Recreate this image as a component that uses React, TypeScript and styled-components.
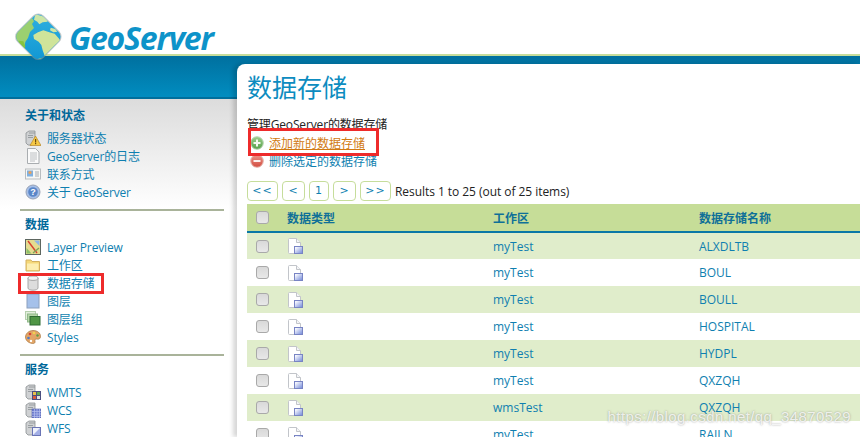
import React from "react";
import styled, { createGlobalStyle } from "styled-components";

const GlobalStyle = createGlobalStyle`
  html, body {
    margin: 0;
    padding: 0;
    width: 860px;
    height: 437px;
    overflow: hidden;
    background: #ffffff;
    font-family: "Open Sans", "Noto Sans CJK SC", sans-serif;
  }
  * { box-sizing: border-box; }
`;

const CJK = `"Open Sans", "Noto Sans CJK SC", sans-serif`;

const Logo = () => (
  <svg width="50" height="52" viewBox="39 39 150 156">
    <defs>
      <clipPath id="globe">
        <rect x="62" y="60" width="106" height="106" rx="20" transform="rotate(45 115 113)" />
      </clipPath>
      <linearGradient id="sea" x1="0" y1="0" x2="0" y2="1">
        <stop offset="0" stopColor="#2fb0e0" />
        <stop offset="1" stopColor="#0f96d2" />
      </linearGradient>
    </defs>
    <rect x="59" y="57" width="112" height="112" rx="23" transform="rotate(45 115 113)" fill="#8f9a9c" opacity="0.55" />
    <g clipPath="url(#globe)">
      <rect x="39" y="39" width="150" height="156" fill="url(#sea)" />
      <path d="M40 105l20-28 22-14 14-6 6 10-6 8 6 12-12 12-6 18-8 12-4 24-14-18-12-18z" fill="#9bd070" />
      <path d="M56 125l14 2 6 14-4 16-12-10z" fill="#86c440" />
      <path d="M106 46l22 6 20 4-6 12-14 2-10 6-6-8-10-6z" fill="#cde6a6" />
      <path d="M100 108l14-8 16-6 18 6 16 4 12 14 6 8-16 12-14 14-10 14-8 4-6-16-4-16-8-10-14-8z" fill="#cfe49a" />
      <path d="M96 186l24-8 22-4-8 14-18 8z" fill="#a9d87a" />
      <path d="M152 86l14 4 6 8-12 2-10-6z" fill="#cde6a6" />
    </g>
  </svg>
);

const Server = ({ children }: { children?: React.ReactNode }) => (
  <svg width="16" height="16" viewBox="0 0 16 16">
    <path d="M1 3l3-2h6v12l-3 2H3l-2-2z" fill="#cfd1d3" stroke="#8a8f92" strokeWidth="0.8" />
    <path d="M4 3h6" stroke="#8a8f92" strokeWidth="0.8" />
    <rect x="3" y="5" width="5" height="1" fill="#9a9fa2" />
    <rect x="3" y="7" width="5" height="1" fill="#9a9fa2" />
    {children}
  </svg>
);

const icons: Record<string, React.ReactNode> = {
  status: (
    <Server>
      <path d="M10.500 6L16 15.500H5z" fill="#f6c945" stroke="#b8862a" strokeWidth="0.7" />
      <rect x="10" y="9" width="1.200" height="3.500" fill="#6b4a10" />
      <rect x="10" y="13" width="1.200" height="1.200" fill="#6b4a10" />
    </Server>
  ),
  log: (
    <svg width="16" height="16" viewBox="0 0 16 16">
      <path d="M2.500 0.500h8l3.500 3.500v11.500H2.500z" fill="#fafafa" stroke="#a9adb0" />
      <path d="M5 5h7M5 7h7M5 9h7M5 11h7M5 13h5" stroke="#b6b9bc" strokeWidth="0.9" />
    </svg>
  ),
  contact: (
    <svg width="16" height="16" viewBox="0 0 16 16">
      <rect x="0.500" y="3" width="15" height="10" fill="#f7f7f5" stroke="#b9bdc0" />
      <rect x="2" y="4.500" width="6" height="6" fill="#7fb0e0" />
      <circle cx="5" cy="6.500" r="1.600" fill="#e9a05a" />
      <path d="M10 6h4M10 8h4M10 10h4" stroke="#a8acb0" />
    </svg>
  ),
  about: (
    <svg width="16" height="16" viewBox="0 0 16 16">
      <circle cx="8" cy="8" r="7" fill="#a5bfe8" stroke="#9aa3b5" />
      <circle cx="8" cy="8" r="4.800" fill="#5a86c8" />
      <text x="8" y="11" textAnchor="middle" fontSize="9" fontWeight="700" fill="#ffffff" fontFamily="Liberation Sans">?</text>
    </svg>
  ),
  preview: (
    <svg width="16" height="16" viewBox="0 0 16 16">
      <rect x="0.500" y="0.500" width="15" height="15" fill="#e4dc8f" stroke="#5d6660" />
      <path d="M9 1.500h5.500V7z" fill="#8fb5e6" />
      <path d="M1.500 9l5 5.500H1.500z" fill="#8cc06a" />
      <path d="M3 2l9 12" stroke="#d8402f" strokeWidth="1.400" />
      <path d="M8 14l6-5" stroke="#7fa65a" strokeWidth="1.400" />
    </svg>
  ),
  folder: (
    <svg width="16" height="16" viewBox="0 0 16 16">
      <path d="M1 3h5l1 1.500h7.500V14H1z" fill="#f5d878" stroke="#d4b060" />
      <rect x="2" y="6.500" width="11.500" height="6.500" fill="#fdeeb0" />
    </svg>
  ),
  store: (
    <svg width="16" height="16" viewBox="0 0 16 16">
      <path d="M3 3v10c0 1.300 2.200 2.200 5 2.200s5-.9 5-2.200V3z" fill="#dddddd" stroke="#a6a6a6" />
      <ellipse cx="8" cy="3.200" rx="5" ry="2.200" fill="#f3f3f3" stroke="#a6a6a6" />
    </svg>
  ),
  layer: (
    <svg width="16" height="16" viewBox="0 0 16 16">
      <rect x="2" y="1" width="12" height="14" fill="#a5c1ea" stroke="#8ca0bd" />
    </svg>
  ),
  group: (
    <svg width="16" height="16" viewBox="0 0 16 16">
      <rect x="0.500" y="0.500" width="10" height="8" fill="#e3efdc" stroke="#b5cfae" />
      <rect x="2.500" y="3" width="10" height="8" fill="#b6d6a8" stroke="#8fb88a" />
      <rect x="5" y="5.500" width="10" height="8.500" fill="#4f9545" stroke="#2f6b32" />
    </svg>
  ),
  styles: (
    <svg width="16" height="16" viewBox="0 0 16 16">
      <path d="M8 1.500c4.500 0 7.500 2.500 7.500 6 0 2.500-2 3-3.500 2.600-1.600-.4-2.500.5-2 2 .5 1.600-.6 2.700-2.500 2.400C3.500 14 .5 11.500.5 8S4 1.500 8 1.500z" fill="#e2a566" stroke="#a8743c" strokeWidth="0.7" />
      <circle cx="5" cy="5" r="1.300" fill="#d8402f" />
      <circle cx="9" cy="4" r="1.300" fill="#f1d14f" />
      <circle cx="12.500" cy="6.500" r="1.200" fill="#5f9e46" />
      <circle cx="3.500" cy="9" r="1.300" fill="#4f79c5" />
      <circle cx="6" cy="12" r="1.200" fill="#ffffff" />
    </svg>
  ),
  wmts: (
    <Server>
      <rect x="7" y="7" width="9" height="9" fill="#4a4f80" />
      <rect x="8" y="8" width="3" height="3" fill="#e8c04a" />
      <rect x="12" y="8" width="3" height="3" fill="#5fa84d" />
      <rect x="8" y="12" width="3" height="3" fill="#d85a3a" />
      <rect x="12" y="12" width="3" height="3" fill="#e0e0e0" />
    </Server>
  ),
  wcs: (
    <Server>
      <rect x="7" y="7" width="9" height="9" fill="#6f7fd0" stroke="#5560a8" strokeWidth="0.6" />
      <path d="M7 9.500h9M7 12h9M7 14.500h9M9.500 7v9M12 7v9M14.500 7v9" stroke="#b9c2ee" strokeWidth="0.7" />
    </Server>
  ),
  wfs: (
    <Server>
      <rect x="7.500" y="7.500" width="8" height="8" fill="#eef1fb" stroke="#6a74b5" />
      <path d="M8 15l7-7v7z" fill="#a3afe6" />
    </Server>
  ),
};

const PageIcon = () => (
  <svg width="15" height="16" viewBox="0 0 15 16">
    <defs>
      <linearGradient id="corner" x1="0" y1="0" x2="1" y2="1">
        <stop offset="0.2" stopColor="#f2f4fc" />
        <stop offset="1" stopColor="#6f86d8" />
      </linearGradient>
    </defs>
    <path d="M.5 1.500q0-1 1-1h7l4 4v10q0 1-1 1h-10q-1 0-1-1z" fill="#ffffff" stroke="#c2c5ca" />
    <path d="M8.500 .5v4h4" fill="#f4f5f7" stroke="#c2c5ca" />
    <rect x="6.500" y="8.500" width="8" height="7" fill="url(#corner)" stroke="#7884c4" />
  </svg>
);

const PlusIcon = () => (
  <svg width="14" height="14" viewBox="0 0 14 14">
    <defs>
      <linearGradient id="plus" x1="0" y1="0" x2="0" y2="1">
        <stop offset="0" stopColor="#9ccf8c" />
        <stop offset="1" stopColor="#55a04a" />
      </linearGradient>
    </defs>
    <circle cx="7" cy="7" r="6.300" fill="url(#plus)" stroke="#bcd4b4" />
    <path d="M7 3.500v7M3.500 7h7" stroke="#f2f8ee" strokeWidth="2" />
  </svg>
);

const MinusIcon = () => (
  <svg width="14" height="14" viewBox="0 0 14 14">
    <defs>
      <linearGradient id="minus" x1="0" y1="0" x2="0" y2="1">
        <stop offset="0" stopColor="#ec9488" />
        <stop offset="1" stopColor="#d24c40" />
      </linearGradient>
    </defs>
    <circle cx="7" cy="7" r="6.300" fill="url(#minus)" stroke="#e6b8b0" />
    <path d="M3.500 7h7" stroke="#fbf0ee" strokeWidth="2" />
  </svg>
);

const Header = styled.header`
  height: 56px;
  background: #ffffff;
  border-bottom: 2px solid #c6dd9b;
  display: flex;
  align-items: flex-start;
  padding: 12px 0 0 13px;
`;

const Wordmark = styled.span`
  font-family: "Open Sans", sans-serif;
  font-style: italic;
  font-weight: 700;
  font-size: 32px;
  line-height: 34px;
  letter-spacing: -1.2px;
  color: #0d93c9;
  margin: 9px 0 0 6px;
`;

const Band = styled.div`
  height: 43px;
  background: linear-gradient(#00709f, #018dc0);
  border-bottom: 2px solid #006f9c;
`;

const Body = styled.div`
  display: flex;
  align-items: flex-start;
`;

const Sidebar = styled.nav`
  width: 237px;
  height: 338px;
  flex: none;
  padding: 8px 13px 0 20px;
  background: linear-gradient(#dcdcdc, #ffffff 110px);
`;

const Section = styled.section`
  border-bottom: 2px solid #a9b39a;
  padding: 0 0 8px 5px;
  margin-bottom: 5px;
  &:last-child { border-bottom: none; }
`;

const SectionTitle = styled.h3`
  margin: 0 0 4px;
  font-family: ${CJK};
  font-size: 12px;
  line-height: 18px;
  font-weight: 700;
  color: #00689a;
`;

const NavItem = styled.a`
  display: flex;
  align-items: center;
  gap: 6px;
  height: 18px;
  font-family: ${CJK};
  font-size: 12px;
  letter-spacing: -0.15px;
  color: #0f7fb0;
  white-space: nowrap;
  svg { flex: none; }
`;

const Main = styled.main`
  position: relative;
  flex: 1;
  height: 373px;
  margin-top: -35px;
  padding: 7px 0 0 10px;
  background: #ffffff;
  border-radius: 8px 0 0 0;
  box-shadow: -4px 0 4px rgba(0, 0, 0, 0.16);
  overflow: hidden;
`;

const Title = styled.h1`
  margin: 0;
  font-family: ${CJK};
  font-size: 25px;
  line-height: 32px;
  font-weight: 400;
  color: #0d8cc0;
`;

const Description = styled.p`
  margin: 13px 0 0;
  font-family: ${CJK};
  font-size: 12px;
  line-height: 18px;
  letter-spacing: -0.15px;
  color: #222222;
`;

const ActionLink = styled.a<{ $primary?: boolean }>`
  display: flex;
  align-items: center;
  gap: 5px;
  height: 18px;
  padding-left: 3px;
  font-family: ${CJK};
  font-size: 12px;
  color: ${(p) => (p.$primary ? "#d17a12" : "#0f7fb0")};
  text-decoration: ${(p) => (p.$primary ? "underline" : "none")};
`;

const Pager = styled.div`
  display: flex;
  align-items: center;
  gap: 4px;
  margin-top: 11px;
  height: 20px;
  font-size: 12px;
  letter-spacing: -0.05px;
  color: #222222;
`;

const PageButton = styled.button<{ $width: number }>`
  width: ${(p) => p.$width}px;
  height: 20px;
  padding: 0;
  background: #ffffff;
  border: 1px solid #c6dd9b;
  border-radius: 4px;
  font-family: "DejaVu Sans", sans-serif;
  font-size: 11px;
  line-height: 16px;
  letter-spacing: 1px;
  color: #0f7fb0;
`;

const Table = styled.table`
  width: 613px;
  margin-top: 3px;
  border-collapse: collapse;
  table-layout: fixed;
`;

const Th = styled.th<{ $width?: number }>`
  width: ${(p) => (p.$width ? `${p.$width}px` : "auto")};
  height: 28px;
  padding: 0;
  text-align: left;
  background: #c6dd98;
  border-bottom: 2px solid #0a78a6;
  font-family: ${CJK};
  font-size: 12px;
  font-weight: 700;
  color: #0f7098;
`;

const Row = styled.tr`
  height: 27px;
  &:nth-child(odd) { background: #e0edcb; }
`;

const Td = styled.td`
  padding: 0;
  font-size: 12px;
  color: #0f7fb0;
  svg { display: block; margin-left: 1px; }
`;

const CheckBox = styled.span`
  display: block;
  width: 13px;
  height: 13px;
  margin-left: 9px;
  background: linear-gradient(#d9d9d9, #e8e8e8);
  border: 1px solid #a9a9a9;
  border-radius: 3px;
`;

const RedBox = styled.div`
  position: absolute;
  border: 3px solid #ee2b2b;
`;

const ActionHighlight = styled(RedBox)`
  left: 11px;
  top: 64px;
  width: 131px;
  height: 28px;
`;

const StoreHighlight = styled(RedBox)`
  left: 18px;
  top: 273px;
  width: 86px;
  height: 21px;
`;

const Watermark = styled.div`
  position: absolute;
  right: 9px;
  top: 408px;
  font-family: "Liberation Sans", sans-serif;
  font-size: 15px;
  letter-spacing: 0.4px;
  color: rgba(255, 255, 255, 0.8);
  text-shadow: 0 0 2px rgba(110, 110, 110, 0.7);
`;

const sections = [
  {
    title: "关于和状态",
    items: [
      ["status", "服务器状态"],
      ["log", "GeoServer的日志"],
      ["contact", "联系方式"],
      ["about", "关于 GeoServer"],
    ],
  },
  {
    title: "数据",
    items: [
      ["preview", "Layer Preview"],
      ["folder", "工作区"],
      ["store", "数据存储"],
      ["layer", "图层"],
      ["group", "图层组"],
      ["styles", "Styles"],
    ],
  },
  {
    title: "服务",
    items: [
      ["wmts", "WMTS"],
      ["wcs", "WCS"],
      ["wfs", "WFS"],
    ],
  },
];

const rows = [
  ["myTest", "ALXDLTB"],
  ["myTest", "BOUL"],
  ["myTest", "BOULL"],
  ["myTest", "HOSPITAL"],
  ["myTest", "HYDPL"],
  ["myTest", "QXZQH"],
  ["wmsTest", "QXZQH"],
  ["myTest", "RAILN"],
];

export default function App() {
  return (
    <>
      <GlobalStyle />
      <Header>
        <Logo />
        <Wordmark>GeoServer</Wordmark>
      </Header>
      <Band />
      <Body>
        <Sidebar>
          {sections.map((section) => (
            <Section key={section.title}>
              <SectionTitle>{section.title}</SectionTitle>
              {section.items.map(([icon, label]) => (
                <NavItem key={label}>
                  {icons[icon]}
                  {label}
                </NavItem>
              ))}
            </Section>
          ))}
        </Sidebar>
        <Main>
          <Title>数据存储</Title>
          <Description>管理GeoServer的数据存储</Description>
          <ActionLink $primary>
            <PlusIcon />
            添加新的数据存储
          </ActionLink>
          <ActionLink>
            <MinusIcon />
            删除选定的数据存储
          </ActionLink>
          <Pager>
            <PageButton $width={31}>&lt;&lt;</PageButton>
            <PageButton $width={23}>&lt;</PageButton>
            <PageButton $width={20}>1</PageButton>
            <PageButton $width={23}>&gt;</PageButton>
            <PageButton $width={31}>&gt;&gt;</PageButton>
            Results 1 to 25 (out of 25 items)
          </Pager>
          <Table>
            <thead>
              <tr>
                <Th $width={40}>
                  <CheckBox />
                </Th>
                <Th $width={206}>数据类型</Th>
                <Th $width={206}>工作区</Th>
                <Th>数据存储名称</Th>
              </tr>
            </thead>
            <tbody>
              {rows.map(([workspace, name], i) => (
                <Row key={i}>
                  <Td>
                    <CheckBox />
                  </Td>
                  <Td>
                    <PageIcon />
                  </Td>
                  <Td>{workspace}</Td>
                  <Td>{name}</Td>
                </Row>
              ))}
            </tbody>
          </Table>
          <ActionHighlight />
        </Main>
      </Body>
      <StoreHighlight />
      <Watermark>https://blog.csdn.net/qq_34870529</Watermark>
    </>
  );
}
